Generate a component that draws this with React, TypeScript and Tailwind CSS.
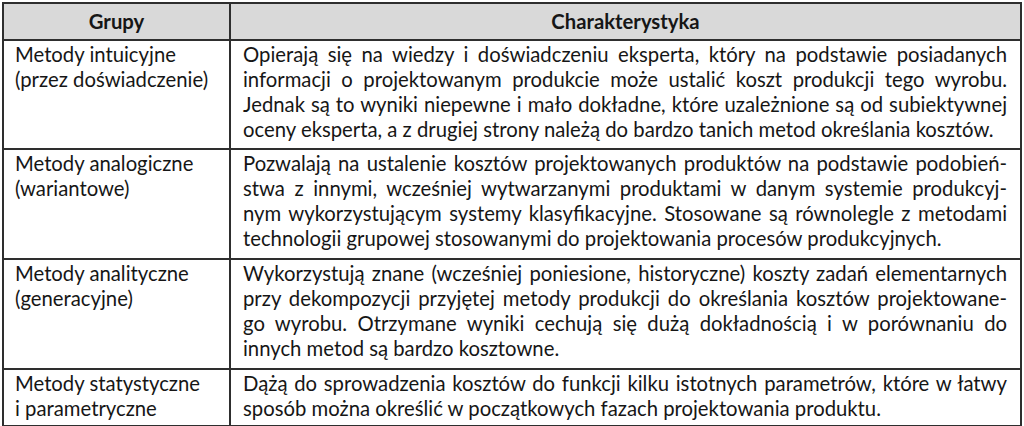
const rows: { group: string[]; lines: string[]; h: string }[] = [
  {
    group: ["Metody intuicyjne", "(przez doświadczenie)"],
    lines: [
      "Opierają się na wiedzy i doświadczeniu eksperta, który na podstawie posiadanych",
      "informacji o projektowanym produkcie może ustalić koszt produkcji tego wyrobu.",
      "Jednak są to wyniki niepewne i mało dokładne, które uzależnione są od subiektywnej",
      "oceny eksperta, a z drugiej strony należą do bardzo tanich metod określania kosztów.",
    ],
    h: "h-[109px]",
  },
  {
    group: ["Metody analogiczne", "(wariantowe)"],
    lines: [
      "Pozwalają na ustalenie kosztów projektowanych produktów na podstawie podobień-",
      "stwa z innymi, wcześniej wytwarzanymi produktami w danym systemie produkcyj-",
      "nym wykorzystującym systemy klasyfikacyjne. Stosowane są równolegle z metodami",
      "technologii grupowej stosowanymi do projektowania procesów produkcyjnych.",
    ],
    h: "h-[110px]",
  },
  {
    group: ["Metody analityczne", "(generacyjne)"],
    lines: [
      "Wykorzystują znane (wcześniej poniesione, historyczne) koszty zadań elementarnych",
      "przy dekompozycji przyjętej metody produkcji do określania kosztów projektowane-",
      "go wyrobu. Otrzymane wyniki cechują się dużą dokładnością i w porównaniu do",
      "innych metod są bardzo kosztowne.",
    ],
    h: "h-[110px]",
  },
  {
    group: ["Metody statystyczne", "i parametryczne"],
    lines: [
      "Dążą do sprowadzenia kosztów do funkcji kilku istotnych parametrów, które w łatwy",
      "sposób można określić w początkowych fazach projektowania produktu.",
    ],
    h: "h-[57px]",
  },
];

export default function App() {
  return (
    <div className="w-[1024px] h-[426px] bg-white pl-[2px] pt-[2px] font-['Lato','Liberation_Sans',sans-serif] text-[20.3px] leading-[25px] text-[#161616]">
      <table className="w-[1020px] border-collapse table-fixed">
        <colgroup>
          <col className="w-[227px]" />
          <col />
        </colgroup>
        <thead>
          <tr className="bg-[#d9d9d9] h-[37px]">
            <th className="border-2 border-[#2e2e2e] p-0 font-bold text-center">Grupy</th>
            <th className="border-2 border-[#2e2e2e] p-0 font-bold text-center">Charakterystyka</th>
          </tr>
        </thead>
        <tbody>
          {rows.map((r) => (
            <tr key={r.group[0]} className={r.h}>
              <td className="border-2 border-[#2e2e2e] align-top pl-[11px] pr-2 pt-[1px] pb-0">
                {r.group.map((g) => (
                  <div key={g} className="whitespace-nowrap">{g}</div>
                ))}
              </td>
              <td className="border-2 border-[#2e2e2e] align-top pl-[12px] pr-[13px] pt-[1px] pb-0">
                {r.lines.map((l, i) => (
                  <div
                    key={i}
                    className={
                      i < r.lines.length - 1
                        ? "whitespace-nowrap text-justify [text-align-last:justify]"
                        : "whitespace-nowrap"
                    }
                  >
                    {l}
                  </div>
                ))}
              </td>
            </tr>
          ))}
        </tbody>
      </table>
    </div>
  );
}
